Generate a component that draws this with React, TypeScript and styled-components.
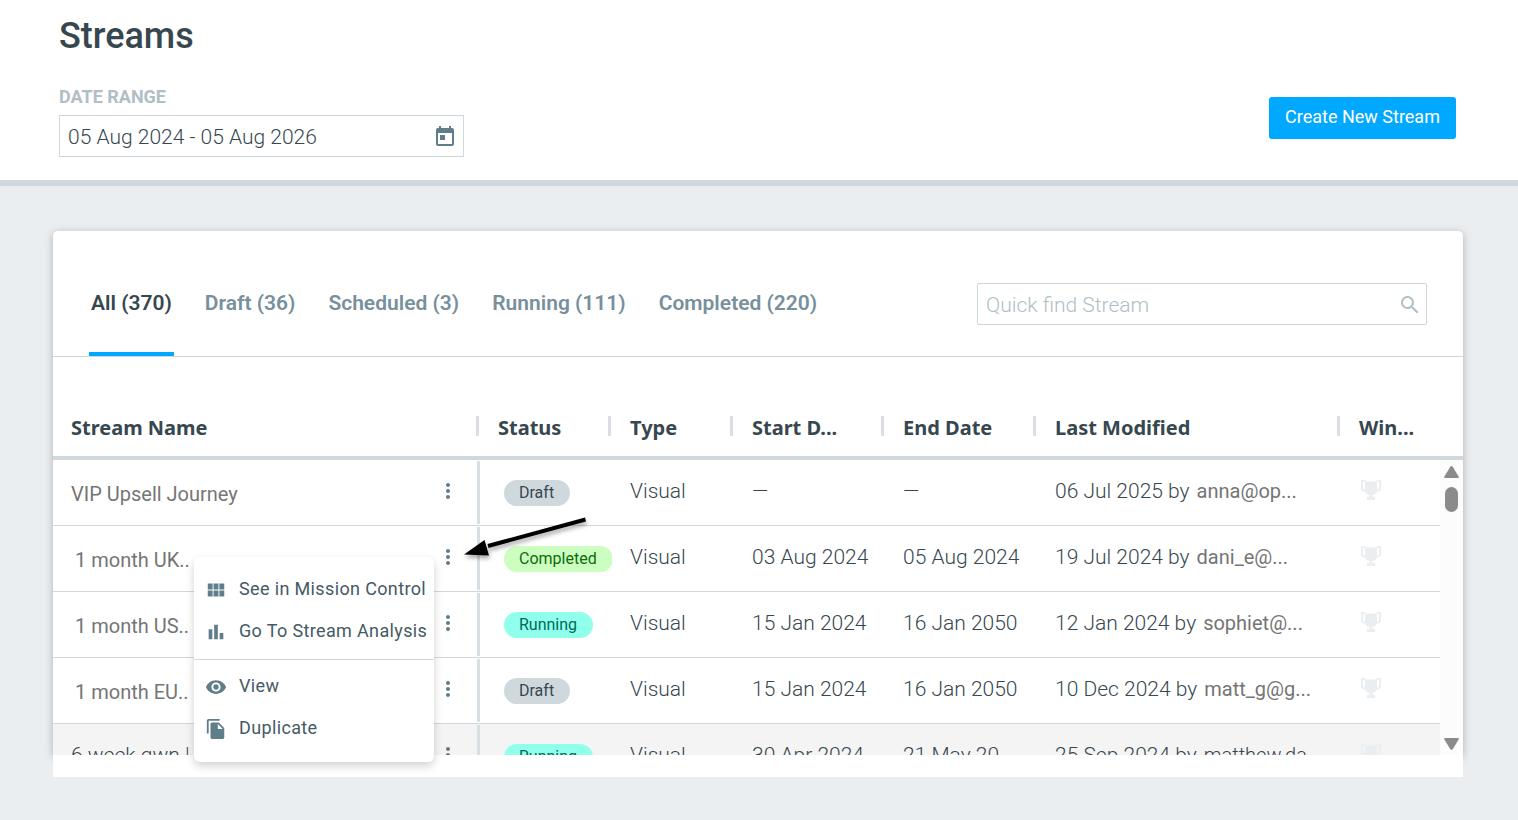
import React from "react";
import styled, { createGlobalStyle, css } from "styled-components";
import {
  MdBarChart,
  MdFileCopy,
  MdMoreVert,
  MdSearch,
  MdToday,
  MdViewModule,
  MdVisibility,
} from "react-icons/md";

const GlobalStyle = createGlobalStyle`
  *, *::before, *::after { box-sizing: border-box; }
  html { background: #eaeef1; }
  body {
    margin: 0;
    font-family: Roboto, "Liberation Sans", sans-serif;
    color: #37474f;
  }
  button, input { font: inherit; color: inherit; }
`;

const PageHeader = styled.header`
  display: flex;
  justify-content: space-between;
  align-items: flex-end;
  padding: 14px 62px 23px 59px;
  background: #fff;
  border-bottom: 6px solid #cfd8dc;
`;

const Title = styled.h1`
  margin: 0 0 28px;
  font-size: 36px;
  line-height: 44px;
  font-weight: 500;
`;

const FieldLabel = styled.label`
  display: block;
  margin-bottom: 7px;
  font-size: 18px;
  line-height: 22px;
  font-weight: 700;
  color: #b0bec5;
`;

const FieldBox = styled.div<{ $width: number; $radius?: number; $end?: number }>`
  display: flex;
  align-items: center;
  width: ${(p) => p.$width}px;
  height: 42px;
  padding: 2px ${(p) => p.$end ?? 6}px 0 8px;
  border: 1px solid #cfd8dc;
  border-radius: ${(p) => p.$radius ?? 0}px;
  background: #fff;
`;

const TextInput = styled.input`
  flex: 1;
  min-width: 0;
  padding: 0;
  border: 0;
  outline: 0;
  background: transparent;
  font-size: 21px;
  line-height: 28px;
  font-weight: 300;
  &::placeholder {
    color: #b0bec5;
    opacity: 1;
  }
`;

const IconButton = styled.button<{ $color: string }>`
  display: flex;
  padding: 0;
  border: 0;
  background: transparent;
  color: ${(p) => p.$color};
  cursor: pointer;
`;

const PrimaryButton = styled.button`
  min-width: 187px;
  height: 42px;
  margin-bottom: 18px;
  padding: 0 12px 3px;
  border: 0;
  border-radius: 3px;
  background: #00a9ff;
  color: #fff;
  font-size: 18px;
  font-weight: 450;
  cursor: pointer;
`;

const Main = styled.main`
  padding: 45px 55px 43px 53px;
`;

const Card = styled.section`
  position: relative;
  border-radius: 5px 5px 0 0;
  background: #fff;
  box-shadow: 0 2px 8px rgba(0, 0, 0, 0.26);
`;

const CardFooter = styled.div`
  position: relative;
  height: 22px;
  background: #fff;
`;

const TabBar = styled.div`
  display: flex;
  justify-content: space-between;
  align-items: flex-start;
  padding: 0 36px;
  border-bottom: 1px solid #cfd8dc;
`;

const Tabs = styled.div`
  display: flex;
  gap: 29px;
`;

const Tab = styled.button<{ $active: boolean }>`
  height: 125px;
  padding: 60px 2px 37px;
  border: 0;
  border-bottom: 4px solid ${(p) => (p.$active ? "#00a9ff" : "transparent")};
  background: transparent;
  color: ${(p) => (p.$active ? "#37474f" : "#78909c")};
  font-size: 21px;
  line-height: 24px;
  font-weight: 600;
  white-space: nowrap;
  cursor: pointer;
`;

const SearchForm = styled.form`
  padding-top: 52px;
`;

const TableArea = styled.div`
  display: grid;
  grid-template-columns: minmax(0, 1fr);
`;

const columns = css`
  display: grid;
  grid-template-columns: minmax(0, 1fr) 132px 122px 151px 152px 304px 126px;
`;

const Table = styled.table`
  grid-area: 1 / 1;
  display: block;
`;

const Head = styled.thead`
  display: block;
  border-bottom: 4px solid #cfd8dc;
`;

const HeadRow = styled.tr`
  ${columns}
  padding: 59px 0 20px;
`;

const HeadCell = styled.th`
  height: 20px;
  padding: 0 0 0 19px;
  border-left: 3px solid #dadee4;
  font-family: "Noto Sans", "Open Sans", sans-serif;
  font-size: 20px;
  line-height: 24px;
  font-weight: 700;
  text-align: left;
  white-space: nowrap;
  &:first-child {
    padding-left: 18px;
    border-left: 0;
  }
`;

const Body = styled.tbody`
  display: block;
  height: 295px;
  overflow: hidden;
  padding-right: 23px;
`;

const Row = styled.tr<{ $hovered?: boolean }>`
  ${columns}
  grid-template-columns: minmax(0, 1fr) 132px 122px 151px 152px 304px 103px;
  height: 66px;
  border-bottom: 1px solid #cfd8dc;
  background: ${(p) => (p.$hovered ? "#f4f4f4" : "#fff")};
`;

const Cell = styled.td`
  padding: 18px 0 0 22px;
  font-size: 21px;
  line-height: 26px;
  font-weight: 300;
  white-space: nowrap;
`;

const NameCell = styled(Cell)`
  display: flex;
  justify-content: space-between;
  margin: 1px -4px 1px 0;
  padding: 0 17px 0 18px;
  border-right: 3px solid #d9dee2;
`;

const Name = styled.span<{ $muted: boolean; $indent: boolean }>`
  padding: ${(p) => (p.$muted ? 20 : 17)}px 0 0 ${(p) => (p.$indent ? 4 : 0)}px;
  font-size: ${(p) => (p.$muted ? 20 : 21)}px;
  font-weight: ${(p) => (p.$muted ? 400 : 300)};
  color: ${(p) => (p.$muted ? "#757575" : "#37474f")};
`;

const RowMenuButton = styled(IconButton)`
  align-self: flex-start;
  margin-top: 18px;
`;

const StatusCell = styled(Cell)`
  padding: 20px 0 0 28px;
`;

const PillClip = styled.div`
  width: 108px;
  overflow: hidden;
`;

const pillTones = {
  Draft: { background: "#cfd8dc", color: "#37474f" },
  Completed: { background: "#ccffbf", color: "#0c6b0c" },
  Running: { background: "#90ffec", color: "#00695c" },
};

type Status = keyof typeof pillTones;

const Pill = styled.span<{ $status: Status }>`
  display: inline-block;
  height: 26px;
  padding: 0 16px 0 15px;
  border-radius: 13px;
  background: ${(p) => pillTones[p.$status].background};
  color: ${(p) => pillTones[p.$status].color};
  font-size: 16px;
  line-height: 25px;
  font-weight: 400;
  vertical-align: top;
`;

const Author = styled.span<{ $muted: boolean }>`
  margin-left: 7px;
  font-size: 20px;
  font-weight: ${(p) => (p.$muted ? 400 : 300)};
  color: ${(p) => (p.$muted ? "#757575" : "#37474f")};
`;

const WinnerCell = styled(Cell)`
  padding: 19px 0 0 23px;
`;

const ScrollTrack = styled.div`
  grid-area: 1 / 1;
  justify-self: end;
  align-self: end;
  display: flex;
  flex-direction: column;
  align-items: center;
  width: 23px;
  height: 295px;
  padding: 6px 0 5px;
  background: #fcfcfc;
`;

const ScrollThumb = styled.div`
  width: 13px;
  height: 25px;
  margin: 9px 0 auto;
  border-radius: 7px;
  background: #8b8b8b;
`;

const Menu = styled.div`
  position: absolute;
  top: 326px;
  right: 1029px;
  z-index: 2;
  width: 240px;
  padding: 11px 0 13px;
  border-radius: 6px;
  background: #fff;
  box-shadow: 0 4px 10px rgba(0, 0, 0, 0.18);
`;

const MenuItem = styled.button`
  display: flex;
  align-items: center;
  gap: 12px;
  width: 100%;
  height: 42px;
  padding: 0 0 0 11px;
  border: 0;
  background: transparent;
  color: #455a64;
  font-size: 18px;
  line-height: 22px;
  letter-spacing: 0.02em;
  white-space: nowrap;
  cursor: pointer;
  svg {
    flex: none;
    width: 22px;
    height: 22px;
    margin-top: 2px;
    color: #607d8b;
  }
`;

const MenuDivider = styled.hr`
  margin: 7px 0 5px;
  border: 0;
  border-top: 1px solid #cfd8dc;
`;

const Pointer = styled.svg`
  position: absolute;
  top: 279px;
  right: 867px;
  z-index: 3;
  filter: drop-shadow(1px 3px 2px rgba(0, 0, 0, 0.35));
`;

const Trophy = () => (
  <svg width="22" height="22" viewBox="0 0 22 22" fill="#eaeef1" aria-hidden="true">
    <path d="M5 2.500h12v8.500c0 3-2 4.700-4.600 5v1.800h1.600q1.200 0 1.200 1.300v1.900H6.800v-1.900q0-1.300 1.200-1.300h1.600V16C7 15.700 5 14 5 11z" />
    <path d="M5.500 1.900H1.900v7.200q0 2.100 2.100 2.400l2 .3M16.500 1.900h3.600v7.200q0 2.100-2.100 2.400l-2 .3" fill="none" stroke="#eaeef1" strokeWidth="1.900" />
  </svg>
);

const ScrollArrow = ({ down }: { down?: boolean }) => (
  <svg width="15" height="12" viewBox="0 0 15 12" fill="#8b8b8b" aria-hidden="true">
    <path
      d={
        down
          ? "M1.200 0h12.600q1.600 0 .8 1.500L9 10.800q-1.500 2.200-3 0L.4 1.500Q-.4 0 1.200 0z"
          : "M1.200 12h12.600q1.600 0 .8-1.500L9 1.200q-1.500-2.200-3 0L.4 10.500Q-.4 12 1.200 12z"
      }
    />
  </svg>
);

type Stream = {
  name: string;
  status: Status;
  start: string;
  end: string;
  modified: string;
  author: string;
  indent?: boolean;
  hovered?: boolean;
};

const streams: Stream[] = [
  { name: "VIP Upsell Journey", status: "Draft", start: "—", end: "—", modified: "06 Jul 2025", author: "anna@op..." },
  { name: "1 month UK..", status: "Completed", start: "03 Aug 2024", end: "05 Aug 2024", modified: "19 Jul 2024", author: "dani_e@...", indent: true },
  { name: "1 month US..", status: "Running", start: "15 Jan 2024", end: "16 Jan 2050", modified: "12 Jan 2024", author: "sophiet@...", indent: true },
  { name: "1 month EU..", status: "Draft", start: "15 Jan 2024", end: "16 Jan 2050", modified: "10 Dec 2024", author: "matt_g@g...", indent: true },
  { name: "6 week gwn |", status: "Running", start: "30 Apr 2024", end: "21 May 20...", modified: "25 Sep 2024", author: "matthew.da...", hovered: true },
];

const tabs = ["All (370)", "Draft (36)", "Scheduled (3)", "Running (111)", "Completed (220)"];

const headings = ["Stream Name", "Status", "Type", "Start D...", "End Date", "Last Modified", "Win..."];

export default function App() {
  return (
    <>
      <GlobalStyle />
      <PageHeader>
        <div>
          <Title>Streams</Title>
          <FieldLabel htmlFor="range">DATE RANGE</FieldLabel>
          <FieldBox $width={405}>
            <TextInput id="range" type="text" defaultValue="05 Aug 2024 - 05 Aug 2026" />
            <IconButton type="button" $color="#607d8b" aria-label="Open calendar">
              <MdToday size={24} />
            </IconButton>
          </FieldBox>
        </div>
        <PrimaryButton type="button">Create New Stream</PrimaryButton>
      </PageHeader>
      <Main>
        <Card>
          <TabBar>
            <Tabs role="tablist">
              {tabs.map((tab, i) => (
                <Tab key={tab} type="button" role="tab" aria-selected={i === 0} $active={i === 0}>
                  {tab}
                </Tab>
              ))}
            </Tabs>
            <SearchForm role="search">
              <FieldBox $width={450} $radius={2} $end={4}>
                <TextInput type="text" aria-label="Quick find Stream" placeholder="Quick find Stream" />
                <IconButton type="button" $color="#b0bec5" aria-label="Search">
                  <MdSearch size={24} />
                </IconButton>
              </FieldBox>
            </SearchForm>
          </TabBar>
          <TableArea>
            <Table>
              <Head>
                <HeadRow>
                  {headings.map((heading) => (
                    <HeadCell key={heading} scope="col">
                      {heading}
                    </HeadCell>
                  ))}
                </HeadRow>
              </Head>
              <Body>
                {streams.map((s) => (
                  <Row key={s.name} $hovered={s.hovered}>
                    <NameCell>
                      <Name $muted={!s.hovered} $indent={!!s.indent}>
                        {s.name}
                      </Name>
                      <RowMenuButton type="button" $color="#607d8b" aria-label={`Actions for ${s.name}`}>
                        <MdMoreVert size={24} />
                      </RowMenuButton>
                    </NameCell>
                    <StatusCell>
                      <PillClip>
                        <Pill $status={s.status}>{s.status}</Pill>
                      </PillClip>
                    </StatusCell>
                    <Cell>Visual</Cell>
                    <Cell>{s.start}</Cell>
                    <Cell>{s.end}</Cell>
                    <Cell>
                      {s.modified} by
                      <Author $muted={!s.hovered}>{s.author}</Author>
                    </Cell>
                    <WinnerCell>
                      <Trophy />
                    </WinnerCell>
                  </Row>
                ))}
              </Body>
            </Table>
            <ScrollTrack aria-hidden="true">
              <ScrollArrow />
              <ScrollThumb />
              <ScrollArrow down />
            </ScrollTrack>
          </TableArea>
          <Menu role="menu">
            <MenuItem type="button" role="menuitem">
              <MdViewModule />
              See in Mission Control
            </MenuItem>
            <MenuItem type="button" role="menuitem">
              <MdBarChart />
              Go To Stream Analysis
            </MenuItem>
            <MenuDivider />
            <MenuItem type="button" role="menuitem">
              <MdVisibility />
              View
            </MenuItem>
            <MenuItem type="button" role="menuitem">
              <MdFileCopy />
              Duplicate
            </MenuItem>
          </Menu>
          <Pointer width="136" height="56" viewBox="0 0 136 56" aria-hidden="true">
            <path d="M125.500 9.500 28 36" stroke="#000" strokeWidth="4" fill="none" />
            <path d="M4 44.500 24.500 30 29 45.500z" fill="#000" />
          </Pointer>
        </Card>
        <CardFooter />
      </Main>
    </>
  );
}
